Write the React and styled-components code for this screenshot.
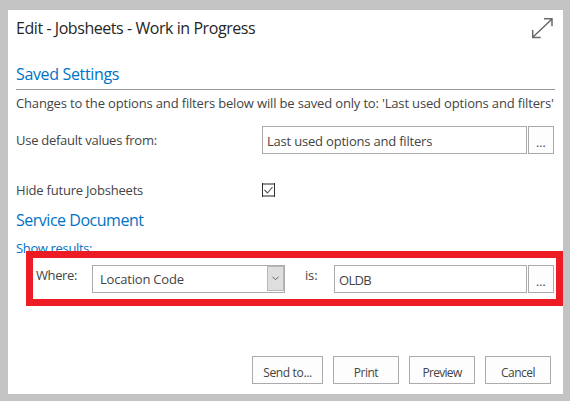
import React from "react";
import styled, { createGlobalStyle } from "styled-components";

const GlobalStyle = createGlobalStyle`
  *, *::before, *::after { box-sizing: border-box; }
  html, body { margin: 0; background: #c3c3c3; overflow: hidden; }
  body { font-family: "Open Sans", "Noto Sans", sans-serif; color: #444; font-size: 13px; }
`;

const Page = styled.div`
  width: 570px;
  height: 401px;
  padding: 10px 7px 7px 8px;
  background: #c3c3c3;
`;

const Dialog = styled.main`
  display: flex;
  flex-direction: column;
  width: 555px;
  height: 384px;
  background: #fff;
`;

const Header = styled.header`
  display: flex;
  justify-content: space-between;
  height: 50px;
  padding: 7px 10px 0 8px;
`;

const Title = styled.h1`
  margin: 1px 0 0;
  font-size: 16px;
  font-weight: 400;
  line-height: 20px;
  letter-spacing: ${(p) => p.$spacing || 0}px;
  color: #262626;
  white-space: nowrap;
`;

const SectionTitle = styled.h2`
  margin: 0 8px;
  height: ${(p) => p.$height}px;
  padding-top: ${(p) => p.$top || 0}px;
  border-bottom: ${(p) => (p.$ruled ? "1px solid #979797" : "0")};
  font-size: 16px;
  font-weight: 400;
  line-height: 20px;
  letter-spacing: ${(p) => p.$spacing || 0}px;
  color: #0072c6;
  white-space: nowrap;
`;

const Text = styled.span`
  font-size: ${(p) => p.$size || 13}px;
  letter-spacing: ${(p) => p.$spacing ?? -0.16}px;
  line-height: 20px;
  white-space: nowrap;
`;

const Note = styled.div`
  height: 36px;
  padding: 3px 0 0 8px;
`;

const FieldRow = styled.div`
  display: grid;
  grid-template-columns: 246px 1fr;
  height: ${(p) => p.$height}px;
  padding-left: 8px;
`;

const Label = styled.label`
  padding-top: 4px;
`;

const Lookup = styled.div`
  display: flex;
  gap: 1px;
`;

const Field = styled.div`
  width: ${(p) => p.$width}px;
  height: 28px;
  padding: 4px 0 0 4px;
  border: 1px solid #ababab;
  background: #fff;
`;

const Button = styled.button`
  display: block;
  width: ${(p) => p.$width}px;
  height: 28px;
  padding: 4px 0 0;
  border: 1px solid #ababab;
  background: #fdfdfd;
  color: #444;
  font: inherit;
  line-height: 20px;
  text-align: center;
`;

const CheckIcon = styled.svg`
  display: block;
  margin-top: 7px;
`;

const LinkRow = styled.div`
  height: 13px;
  padding-left: 8px;
  color: #0072c6;
`;

const Criteria = styled.section`
  position: relative;
  display: flex;
  width: 537px;
  height: 55px;
  margin-left: 18px;
  padding: 7px 2px 0 3px;
  border: 7px solid #ed1c24;
  background: #fff;
`;

const CriteriaLabel = styled.label`
  width: ${(p) => p.$width}px;
  padding-left: ${(p) => p.$indent || 0}px;
`;

const Select = styled.div`
  display: flex;
  justify-content: space-between;
  width: 193px;
  height: 28px;
  padding: 0 0 0 7px;
  border: 1px solid #ababab;
`;

const SelectText = styled.div`
  padding-top: 3px;
`;

const Arrow = styled.div`
  display: flex;
  align-items: center;
  justify-content: center;
  width: 17px;
  height: 25px;
  border: 1px solid #b8b8b8;
  background: #dedede;
`;

const Footer = styled.footer`
  display: flex;
  justify-content: flex-end;
  gap: 10px;
  margin-top: auto;
  padding: 0 12px 10px 0;
`;

const FooterButton = ({ width, spacing, children }) => (
  <Button $width={width}>
    <Text $size={12} $spacing={spacing}>{children}</Text>
  </Button>
);

export default function App() {
  return (
    <>
      <GlobalStyle />
      <Page>
        <Dialog>
          <Header>
            <Title $spacing={-0.44}>Edit - Jobsheets - Work in Progress</Title>
            <svg width="22" height="22" viewBox="0 0 22 22" fill="none" stroke="#6b696c" strokeWidth="1.5">
              <path d="M2 20 21 2M13 1.7h8v7.6M1.7 13v7.5h8" />
            </svg>
          </Header>
          <SectionTitle $height={30} $top={4} $spacing={-0.35} $ruled>Saved Settings</SectionTitle>
          <Note>
            <Text>Changes to the options and filters below will be saved only to: 'Last used options and filters'</Text>
          </Note>
          <FieldRow $height={50}>
            <Label><Text $spacing={-0.27}>Use default values from:</Text></Label>
            <Lookup>
              <Field $width={265}><Text $spacing={-0.2}>Last used options and filters</Text></Field>
              <Button $width={26}><Text $size={12} $spacing={0.1}>...</Text></Button>
            </Lookup>
          </FieldRow>
          <FieldRow $height={33}>
            <Label><Text $spacing={-0.2}>Hide future Jobsheets</Text></Label>
            <CheckIcon width="13" height="14" viewBox="0 0 13 14" fill="none">
              <path d="M0 1h13M0 13h13" stroke="#929292" strokeWidth="2" />
              <path d="M.5 0v14M12.5 0v14" stroke="#303030" />
              <path d="m2.5 7 3 3 5-6" stroke="#555" strokeWidth="1.1" />
            </CheckIcon>
          </FieldRow>
          <SectionTitle $height={29} $top={1} $spacing={-0.48}>Service Document</SectionTitle>
          <LinkRow><Text $spacing={-0.35}>Show results:</Text></LinkRow>
          <Criteria>
            <CriteriaLabel $width={56}><Text $spacing={-0.4}>Where:</Text></CriteriaLabel>
            <Select>
              <SelectText><Text $spacing={-0.2}>Location Code</Text></SelectText>
              <Arrow>
                <svg width="7" height="5" viewBox="0 0 7 5" fill="none" stroke="#666">
                  <path d="m.5.8 3 3 3-3" />
                </svg>
              </Arrow>
            </Select>
            <CriteriaLabel $width={49} $indent={20}><Text>is:</Text></CriteriaLabel>
            <Lookup>
              <Field $width={193}><Text $spacing={-0.7}>OLDB</Text></Field>
              <Button $width={26}><Text $size={12} $spacing={0.1}>...</Text></Button>
            </Lookup>
          </Criteria>
          <Footer>
            <FooterButton width={71} spacing={-0.35}>Send to...</FooterButton>
            <FooterButton width={66} spacing={-0.5}>Print</FooterButton>
            <FooterButton width={66} spacing={-0.7}>Preview</FooterButton>
            <FooterButton width={66} spacing={-0.5}>Cancel</FooterButton>
          </Footer>
        </Dialog>
      </Page>
    </>
  );
}
